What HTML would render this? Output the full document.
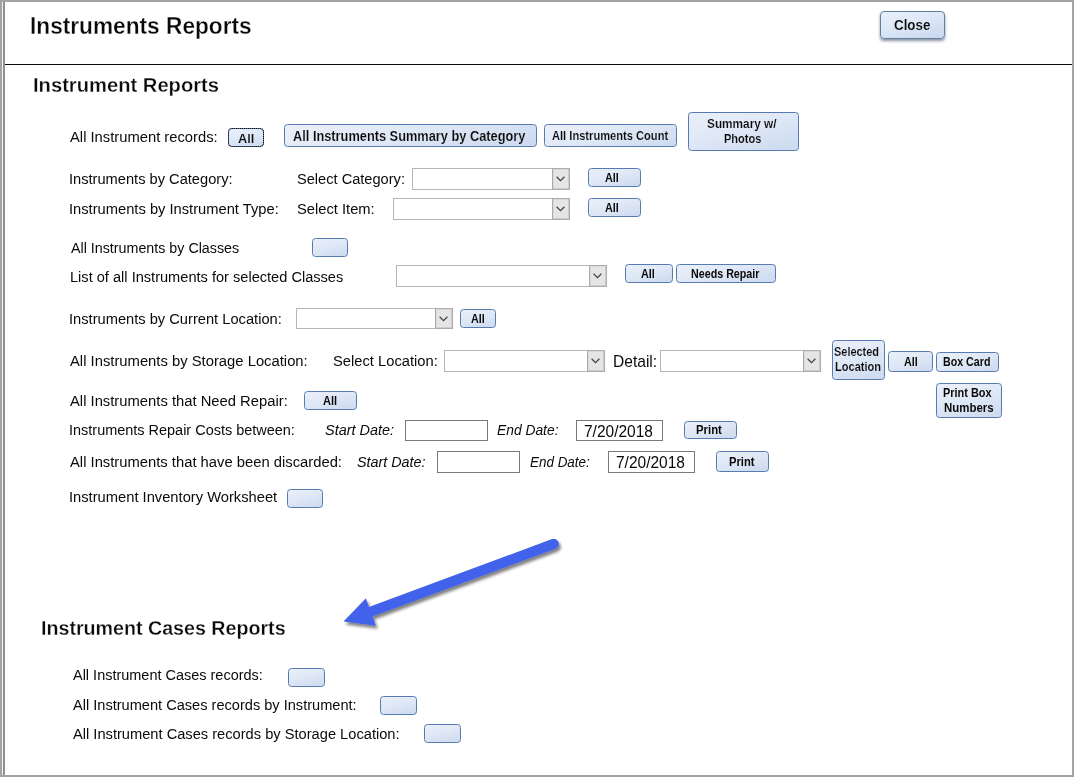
<!DOCTYPE html>
<html><head><meta charset="utf-8"><title>Instruments Reports</title>
<style>
html,body{margin:0;padding:0;}
body{width:1074px;height:777px;overflow:hidden;background:#fff;font-family:"Liberation Sans",sans-serif;color:#000;}
#frame{position:absolute;left:0;top:0;width:1074px;height:777px;overflow:hidden;background:#fff;}
.edge{position:absolute;background:#a3a3a6;}
.t{position:absolute;white-space:pre;transform-origin:0 0;color:#0a0a0a;}
.b{position:absolute;box-sizing:border-box;border:1px solid #577bb0;border-radius:3.5px;background:linear-gradient(165deg,#eaf0fa 0%,#dfe8f6 45%,#ccd9ef 100%);}
.b.close{box-shadow:0 2px 3px rgba(40,55,85,.55);border-color:#60809f;border-radius:4px;background:linear-gradient(165deg,#e9f0fa 0%,#dde7f6 45%,#c8d7ee 100%);}
.b.focus{border-color:#4d6f9f;border-radius:4px;}
.b.focus:after{content:"";position:absolute;left:-1px;top:-1px;right:-1px;bottom:-1px;border:1px dotted #0d0d0d;border-radius:4px;}
.c{position:absolute;box-sizing:border-box;border:1px solid #b6b6b6;background:#fff;}
.c i{position:absolute;right:-1px;top:-1px;bottom:-1px;width:18px;box-sizing:border-box;border:1px solid #ababab;box-shadow:inset -1px -1px 0 #cdcdcd, inset 1px 1px 0 #d9d9d9;background:#e5e5e5;display:flex;align-items:center;justify-content:center;}
.c i svg{margin-left:-1px;}
.x{position:absolute;box-sizing:border-box;border:1px solid #7a7a7a;background:#fff;}

</style></head>
<body>
<div id="frame">
<div class="edge" style="left:0;top:0;width:1074px;height:2px"></div>
<div class="edge" style="left:0;top:0;width:2px;height:777px"></div>
<div class="edge" style="left:1072px;top:0;width:2px;height:777px"></div>
<div class="edge" style="left:0;top:775px;width:1074px;height:2px"></div>
<div class="edge" style="left:2px;top:2px;width:1px;height:773px;background:#f1f1f3"></div>
<div class="edge" style="left:3px;top:2px;width:2px;height:773px;background:#8e8f93"></div>
<div style="position:absolute;left:5px;top:64px;width:1067px;height:1px;background:#0c0c0c"></div>
<svg style="position:absolute;left:0;top:0" width="1074" height="777" viewBox="0 0 1074 777">
<defs><filter id="sh" x="-10%" y="-20%" width="120%" height="150%"><feGaussianBlur in="SourceAlpha" stdDeviation="1.8"/><feOffset dx="1.5" dy="3"/><feComponentTransfer><feFuncA type="linear" slope="0.5"/></feComponentTransfer><feMerge><feMergeNode/><feMergeNode in="SourceGraphic"/></feMerge></filter></defs>
<g filter="url(#sh)">
<line x1="553.8" y1="543.9" x2="372" y2="611.3" stroke="#4262ec" stroke-width="10.2" stroke-linecap="round"/>
<polygon points="343.5,621.5 365.9,598.2 375.9,625.8" fill="#4262ec"/>
</g>
</svg>

<div class="b close" style="left:880px;top:11px;width:65px;height:28px"></div>
<div class="b focus" style="left:228px;top:128px;width:36px;height:19px"></div>
<div class="b " style="left:284px;top:124px;width:253px;height:23px"></div>
<div class="b " style="left:544px;top:124px;width:133px;height:23px"></div>
<div class="b " style="left:688px;top:112px;width:111px;height:39px"></div>
<div class="b " style="left:588px;top:168px;width:53px;height:19px"></div>
<div class="b " style="left:588px;top:198px;width:53px;height:19px"></div>
<div class="b " style="left:312px;top:238px;width:36px;height:19px"></div>
<div class="b " style="left:625px;top:264px;width:48px;height:19px"></div>
<div class="b " style="left:676px;top:264px;width:100px;height:19px"></div>
<div class="b " style="left:460px;top:309px;width:36px;height:19px"></div>
<div class="b " style="left:832px;top:340px;width:53px;height:40px"></div>
<div class="b " style="left:888px;top:351px;width:45px;height:21px"></div>
<div class="b " style="left:936px;top:352px;width:63px;height:20px"></div>
<div class="b " style="left:936px;top:383px;width:66px;height:35px"></div>
<div class="b " style="left:304px;top:391px;width:53px;height:19px"></div>
<div class="b " style="left:684px;top:421px;width:53px;height:18px"></div>
<div class="b " style="left:716px;top:451px;width:53px;height:21px"></div>
<div class="b " style="left:287px;top:489px;width:36px;height:19px"></div>
<div class="b " style="left:288px;top:668px;width:37px;height:19px"></div>
<div class="b " style="left:380px;top:696px;width:37px;height:19px"></div>
<div class="b " style="left:424px;top:724px;width:37px;height:19px"></div>
<div class="c" style="left:412px;top:168px;width:158px;height:22px"><i><svg width="9" height="6" viewBox="0 0 9 6"><path d="M0.6 0.8 L4.5 4.6 L8.4 0.8" fill="none" stroke="#3f3f3f" stroke-width="1.2"/></svg></i></div>
<div class="c" style="left:393px;top:198px;width:177px;height:22px"><i><svg width="9" height="6" viewBox="0 0 9 6"><path d="M0.6 0.8 L4.5 4.6 L8.4 0.8" fill="none" stroke="#3f3f3f" stroke-width="1.2"/></svg></i></div>
<div class="c" style="left:396px;top:265px;width:211px;height:22px"><i><svg width="9" height="6" viewBox="0 0 9 6"><path d="M0.6 0.8 L4.5 4.6 L8.4 0.8" fill="none" stroke="#3f3f3f" stroke-width="1.2"/></svg></i></div>
<div class="c" style="left:296px;top:308px;width:157px;height:21px"><i><svg width="9" height="6" viewBox="0 0 9 6"><path d="M0.6 0.8 L4.5 4.6 L8.4 0.8" fill="none" stroke="#3f3f3f" stroke-width="1.2"/></svg></i></div>
<div class="c" style="left:444px;top:350px;width:161px;height:22px"><i><svg width="9" height="6" viewBox="0 0 9 6"><path d="M0.6 0.8 L4.5 4.6 L8.4 0.8" fill="none" stroke="#3f3f3f" stroke-width="1.2"/></svg></i></div>
<div class="c" style="left:660px;top:350px;width:161px;height:22px"><i><svg width="9" height="6" viewBox="0 0 9 6"><path d="M0.6 0.8 L4.5 4.6 L8.4 0.8" fill="none" stroke="#3f3f3f" stroke-width="1.2"/></svg></i></div>
<div class="x" style="left:405px;top:420px;width:83px;height:21px"></div>
<div class="x" style="left:576px;top:420px;width:87px;height:21px"></div>
<div class="x" style="left:437px;top:451px;width:83px;height:22px"></div>
<div class="x" style="left:608px;top:451px;width:87px;height:22px"></div>
<span class="t" style="left:29.53px;top:12px;font-size:24px;line-height:28.8px;font-weight:700;font-style:normal;-webkit-text-stroke:0.3px #fff;transform:scaleX(0.9444)">Instruments Reports</span>
<span class="t" style="left:32.92px;top:73px;font-size:20.3px;line-height:24.4px;font-weight:700;font-style:normal;-webkit-text-stroke:0.28px #fff;transform:scaleX(0.9945)">Instrument Reports</span>
<span class="t" style="left:41.07px;top:616px;font-size:20.3px;line-height:24.4px;font-weight:700;font-style:normal;-webkit-text-stroke:0.28px #fff;transform:scaleX(0.9687)">Instrument Cases Reports</span>
<span class="t" style="left:69.62px;top:128px;font-size:15.4px;line-height:18.5px;font-weight:400;font-style:normal;transform:scaleX(0.9593)">All Instrument records:</span>
<span class="t" style="left:69.05px;top:170px;font-size:15.4px;line-height:18.5px;font-weight:400;font-style:normal;transform:scaleX(0.9511)">Instruments by Category:</span>
<span class="t" style="left:296.71px;top:170px;font-size:15.4px;line-height:18.5px;font-weight:400;font-style:normal;transform:scaleX(0.9489)">Select Category:</span>
<span class="t" style="left:69.05px;top:200px;font-size:15.4px;line-height:18.5px;font-weight:400;font-style:normal;transform:scaleX(0.9552)">Instruments by Instrument Type:</span>
<span class="t" style="left:296.7px;top:200px;font-size:15.4px;line-height:18.5px;font-weight:400;font-style:normal;transform:scaleX(0.9556)">Select Item:</span>
<span class="t" style="left:70.62px;top:239px;font-size:15.4px;line-height:18.5px;font-weight:400;font-style:normal;transform:scaleX(0.9273)">All Instruments by Classes</span>
<span class="t" style="left:69.67px;top:268px;font-size:15.4px;line-height:18.5px;font-weight:400;font-style:normal;transform:scaleX(0.9480)">List of all Instruments for selected Classes</span>
<span class="t" style="left:69.05px;top:310px;font-size:15.4px;line-height:18.5px;font-weight:400;font-style:normal;transform:scaleX(0.9531)">Instruments by Current Location:</span>
<span class="t" style="left:69.62px;top:352px;font-size:15.4px;line-height:18.5px;font-weight:400;font-style:normal;transform:scaleX(0.9615)">All Instruments by Storage Location:</span>
<span class="t" style="left:332.8px;top:352px;font-size:15.4px;line-height:18.5px;font-weight:400;font-style:normal;transform:scaleX(0.9572)">Select Location:</span>
<span class="t" style="left:612.82px;top:353px;font-size:15.7px;line-height:18.8px;font-weight:400;font-style:normal;transform:scaleX(0.9932)">Detail:</span>
<span class="t" style="left:69.62px;top:392px;font-size:15.4px;line-height:18.5px;font-weight:400;font-style:normal;transform:scaleX(0.9607)">All Instruments that Need Repair:</span>
<span class="t" style="left:69.36px;top:421px;font-size:15.4px;line-height:18.5px;font-weight:400;font-style:normal;transform:scaleX(0.9397)">Instruments Repair Costs between:</span>
<span class="t" style="left:324.97px;top:421px;font-size:15.4px;line-height:18.5px;font-weight:400;font-style:italic;transform:scaleX(0.9383)">Start Date:</span>
<span class="t" style="left:497.28px;top:421px;font-size:15.4px;line-height:18.5px;font-weight:400;font-style:italic;transform:scaleX(0.8983)">End Date:</span>
<span class="t" style="left:69.62px;top:453px;font-size:15.4px;line-height:18.5px;font-weight:400;font-style:normal;transform:scaleX(0.9604)">All Instruments that have been discarded:</span>
<span class="t" style="left:357.07px;top:453px;font-size:15.4px;line-height:18.5px;font-weight:400;font-style:italic;transform:scaleX(0.9314)">Start Date:</span>
<span class="t" style="left:529.9px;top:453px;font-size:15.4px;line-height:18.5px;font-weight:400;font-style:italic;transform:scaleX(0.8730)">End Date:</span>
<span class="t" style="left:69.05px;top:488px;font-size:15.4px;line-height:18.5px;font-weight:400;font-style:normal;transform:scaleX(0.9557)">Instrument Inventory Worksheet</span>
<span class="t" style="left:73.22px;top:666px;font-size:15.4px;line-height:18.5px;font-weight:400;font-style:normal;transform:scaleX(0.9404)">All Instrument Cases records:</span>
<span class="t" style="left:73.22px;top:696px;font-size:15.4px;line-height:18.5px;font-weight:400;font-style:normal;transform:scaleX(0.9474)">All Instrument Cases records by Instrument:</span>
<span class="t" style="left:73.22px;top:725px;font-size:15.4px;line-height:18.5px;font-weight:400;font-style:normal;transform:scaleX(0.9520)">All Instrument Cases records by Storage Location:</span>
<span class="t" style="left:584.26px;top:422px;font-size:16.7px;line-height:20.0px;font-weight:400;font-style:normal;transform:scaleX(0.9288)">7/20/2018</span>
<span class="t" style="left:616.36px;top:453px;font-size:16.7px;line-height:20.0px;font-weight:400;font-style:normal;transform:scaleX(0.9288)">7/20/2018</span>
<span class="t" style="left:893.85px;top:16px;font-size:15.3px;line-height:18.4px;font-weight:700;font-style:normal;-webkit-text-stroke:0.13px #dde6f5;transform:scaleX(0.8740)">Close</span>
<span class="t" style="left:237.72px;top:131px;font-size:13.5px;line-height:16.2px;font-weight:700;font-style:normal;-webkit-text-stroke:0.13px #dde6f5;transform:scaleX(0.9452)">All</span>
<span class="t" style="left:293.05px;top:128px;font-size:14px;line-height:16.8px;font-weight:700;font-style:normal;-webkit-text-stroke:0.13px #dde6f5;transform:scaleX(0.9133)">All Instruments Summary by Category</span>
<span class="t" style="left:551.93px;top:128px;font-size:13.3px;line-height:16.0px;font-weight:700;font-style:normal;-webkit-text-stroke:0.13px #dde6f5;transform:scaleX(0.8363)">All Instruments Count</span>
<span class="t" style="left:706.58px;top:116px;font-size:13px;line-height:15.6px;font-weight:700;font-style:normal;-webkit-text-stroke:0.13px #dde6f5;transform:scaleX(0.9084)">Summary w/</span>
<span class="t" style="left:724.02px;top:131px;font-size:13px;line-height:15.6px;font-weight:700;font-style:normal;-webkit-text-stroke:0.13px #dde6f5;transform:scaleX(0.8494)">Photos</span>
<span class="t" style="left:605.4px;top:171px;font-size:12.5px;line-height:15.0px;font-weight:700;font-style:normal;transform:scaleX(0.8665)">All</span>
<span class="t" style="left:605.4px;top:201px;font-size:12.5px;line-height:15.0px;font-weight:700;font-style:normal;transform:scaleX(0.8665)">All</span>
<span class="t" style="left:641.4px;top:267px;font-size:12.5px;line-height:15.0px;font-weight:700;font-style:normal;transform:scaleX(0.8665)">All</span>
<span class="t" style="left:690.93px;top:267px;font-size:12.5px;line-height:15.0px;font-weight:700;font-style:normal;transform:scaleX(0.8569)">Needs Repair</span>
<span class="t" style="left:471.0px;top:312px;font-size:12.5px;line-height:15.0px;font-weight:700;font-style:normal;transform:scaleX(0.8599)">All</span>
<span class="t" style="left:834.04px;top:344px;font-size:13px;line-height:15.6px;font-weight:700;font-style:normal;-webkit-text-stroke:0.13px #dde6f5;transform:scaleX(0.8425)">Selected</span>
<span class="t" style="left:835.21px;top:359px;font-size:13px;line-height:15.6px;font-weight:700;font-style:normal;-webkit-text-stroke:0.13px #dde6f5;transform:scaleX(0.8512)">Location</span>
<span class="t" style="left:903.7px;top:355px;font-size:12.5px;line-height:15.0px;font-weight:700;font-style:normal;transform:scaleX(0.8599)">All</span>
<span class="t" style="left:942.73px;top:355px;font-size:12.5px;line-height:15.0px;font-weight:700;font-style:normal;transform:scaleX(0.8534)">Box Card</span>
<span class="t" style="left:942.71px;top:386px;font-size:12.5px;line-height:15.0px;font-weight:700;font-style:normal;transform:scaleX(0.8745)">Print Box</span>
<span class="t" style="left:943.68px;top:401px;font-size:12.5px;line-height:15.0px;font-weight:700;font-style:normal;transform:scaleX(0.9150)">Numbers</span>
<span class="t" style="left:323.4px;top:394px;font-size:12.5px;line-height:15.0px;font-weight:700;font-style:normal;transform:scaleX(0.8798)">All</span>
<span class="t" style="left:696.48px;top:423px;font-size:12.5px;line-height:15.0px;font-weight:700;font-style:normal;transform:scaleX(0.9097)">Print</span>
<span class="t" style="left:728.79px;top:455px;font-size:12.5px;line-height:15.0px;font-weight:700;font-style:normal;transform:scaleX(0.8951)">Print</span>
</div>
</body></html>
